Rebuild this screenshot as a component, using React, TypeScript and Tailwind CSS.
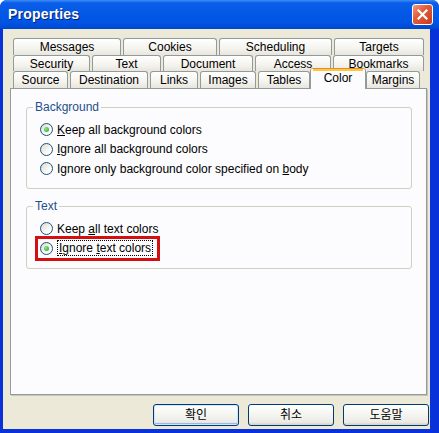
import type { ReactNode } from "react";

const FONT = "font-['Liberation_Sans','Noto_Sans_CJK_KR',sans-serif]";

type Tab = { label: string; w: string; selected?: boolean };

const rows: { h: string; gap: string; tabs: Tab[] }[] = [
  {
    h: "h-[17px]",
    gap: "gap-[2px]",
    tabs: [
      { label: "Messages", w: "w-[108px]" },
      { label: "Cookies", w: "w-[94px]" },
      { label: "Scheduling", w: "w-[113px]" },
      { label: "Targets", w: "w-[90px]" },
    ],
  },
  {
    h: "h-[16px]",
    gap: "gap-[2px]",
    tabs: [
      { label: "Security", w: "w-[77px]" },
      { label: "Text", w: "w-[69px]" },
      { label: "Document", w: "w-[90px]" },
      { label: "Access", w: "w-[76px]" },
      { label: "Bookmarks", w: "w-[91px]" },
    ],
  },
  {
    h: "h-[17px]",
    gap: "gap-[2px]",
    tabs: [
      { label: "Source", w: "w-[55px]" },
      { label: "Destination", w: "w-[78px]" },
      { label: "Links", w: "w-[48px]" },
      { label: "Images", w: "w-[56px]" },
      { label: "Tables", w: "w-[52px]" },
      { label: "Color", w: "w-[50px]", selected: true },
      { label: "Margins", w: "w-[54px]" },
    ],
  },
];

function TabButton({ tab }: { tab: Tab }) {
  if (tab.selected) {
    return (
      <div
        className={`${tab.w} relative z-10 -mx-[2px] -mt-[3px] box-content h-[21px] px-[2px] rounded-t-[3px] border-x border-[#919b9c] bg-[#fcfcfe] flex flex-col`}
      >
        <div className="h-[1px] bg-[#e68b2c] rounded-t-[3px] -mx-[1px]" />
        <div className="h-[2px] bg-[#ffc73c]" />
        <div className="flex-1 flex items-start justify-center text-[12px] leading-[14px] text-black">
          {tab.label}
        </div>
      </div>
    );
  }
  return (
    <div
      className={`${tab.w} h-full rounded-t-[3px] border-t border-x border-[#919b9c] bg-[linear-gradient(to_bottom,#ffffff,#f4f3ee_60%,#e7e5dc)] flex items-center justify-center text-[12px] leading-[14px] text-black`}
    >
      {tab.label}
    </div>
  );
}

function Radio({ checked }: { checked?: boolean }) {
  return (
    <span className="w-[13px] h-[13px] shrink-0 rounded-full border border-[#1c5180] bg-[linear-gradient(135deg,#dcd9cd,#f8f8f4_60%,#ffffff)] flex items-center justify-center">
      {checked && (
        <span className="w-[5px] h-[5px] rounded-full bg-[radial-gradient(circle_at_35%_35%,#8ee68e,#21a121)]" />
      )}
    </span>
  );
}

function Option({ checked, children }: { checked?: boolean; children: ReactNode }) {
  return (
    <div className="h-[19.5px] flex items-center gap-[4px] text-[12px] text-black">
      <Radio checked={checked} />
      <span>{children}</span>
    </div>
  );
}

function Group({ label, height, children }: { label: string; height: string; children: ReactNode }) {
  return (
    <div className={`relative ${height} rounded-[3px] border border-[#d0d0bf] pl-[13px] pt-[12px]`}>
      <span className="absolute -top-[8px] left-[6px] bg-[#fcfcfe] px-[2px] text-[12px] leading-[14px] text-[#1c4f8c]">
        {label}
      </span>
      {children}
    </div>
  );
}

function XpButton({ children, isDefault }: { children: ReactNode; isDefault?: boolean }) {
  return (
    <div
      className={`w-[86px] h-[22px] rounded-[3px] border border-[#003c74] bg-[linear-gradient(to_bottom,#ffffff,#f4f4f0_50%,#ecebe6_85%,#d6d0c5)] flex items-center justify-center text-[12px] text-black ${
        isDefault ? "shadow-[inset_0_0_0_1px_#cee7ff,inset_0_-1px_0_1px_#98b8ea]" : ""
      }`}
    >
      {children}
    </div>
  );
}

export default function App() {
  return (
    <div className={`w-[439px] h-[433px] bg-white ${FONT}`}>
      <div className="w-[439px] h-[433px] rounded-t-[7px] bg-[#0831d9] flex flex-col overflow-hidden">
        {/* title bar */}
        <div className="h-[29px] shrink-0 flex items-center justify-between pl-[8px] pr-[6px] bg-[linear-gradient(to_bottom,#3d8cf6,#0a5ee8_10%,#0358e6_45%,#0054e3_80%,#0046cc)]">
          <span className="text-white font-bold text-[14px] tracking-[0.2px] [text-shadow:1px_1px_0_#0a1e6e]">
            Properties
          </span>
          <div className="w-[21px] h-[21px] rounded-[3px] border border-white bg-[linear-gradient(135deg,#f29a7e,#e35d3c_40%,#c93b1a)] flex items-center justify-center">
            <svg width="11" height="11" viewBox="0 0 11 11">
              <path d="M1.5 1.5 L9.5 9.5 M9.5 1.5 L1.5 9.5" stroke="white" strokeWidth="2.2" strokeLinecap="square" />
            </svg>
          </div>
        </div>

        {/* body */}
        <div className="flex-1 ml-[3px] mr-[9px] mb-[4px] bg-[#ece9d8] flex flex-col pt-[9px]">
          {/* tabs */}
          <div className="pl-[10px] flex flex-col">
            {rows.map((row, i) => (
              <div key={i} className={`flex ${row.h} ${row.gap}`}>
                {row.tabs.map((t) => (
                  <TabButton key={t.label} tab={t} />
                ))}
              </div>
            ))}
          </div>

          {/* panel */}
          <div className="ml-[7px] mr-[3px] h-[307px] border border-[#919b9c] bg-[#fcfcfe] shadow-[1px_1px_0_#c8c5b6] pl-[15px] pr-[14px] pt-[18px] flex flex-col gap-[17px]">
            <Group label="Background" height="h-[82px]">
              <Option checked>
                <u>K</u>eep all background colors
              </Option>
              <Option>
                <u>I</u>gnore all background colors
              </Option>
              <Option>
                Ignore only background color specified on <u>b</u>ody
              </Option>
            </Group>
            <Group label="Text" height="h-[63px]">
              <Option>
                Keep <u>a</u>ll text colors
              </Option>
              <div className="-ml-[5px] -mt-[3px] w-[125px] h-[25px] border-[3px] border-[#d40f0f] pl-[2px] flex items-center gap-[4px] text-[12px] text-black">
                <Radio checked />
                <span className="border border-dotted border-black leading-[14px] px-[1px]">
                  <u>I</u>gnore <u>t</u>ext colors
                </span>
              </div>
            </Group>
          </div>

          {/* buttons */}
          <div className="mt-[9px] flex justify-end gap-[9px] pr-[1px]">
            <XpButton isDefault>확인</XpButton>
            <XpButton>취소</XpButton>
            <XpButton>도움말</XpButton>
          </div>
        </div>
      </div>
    </div>
  );
}
